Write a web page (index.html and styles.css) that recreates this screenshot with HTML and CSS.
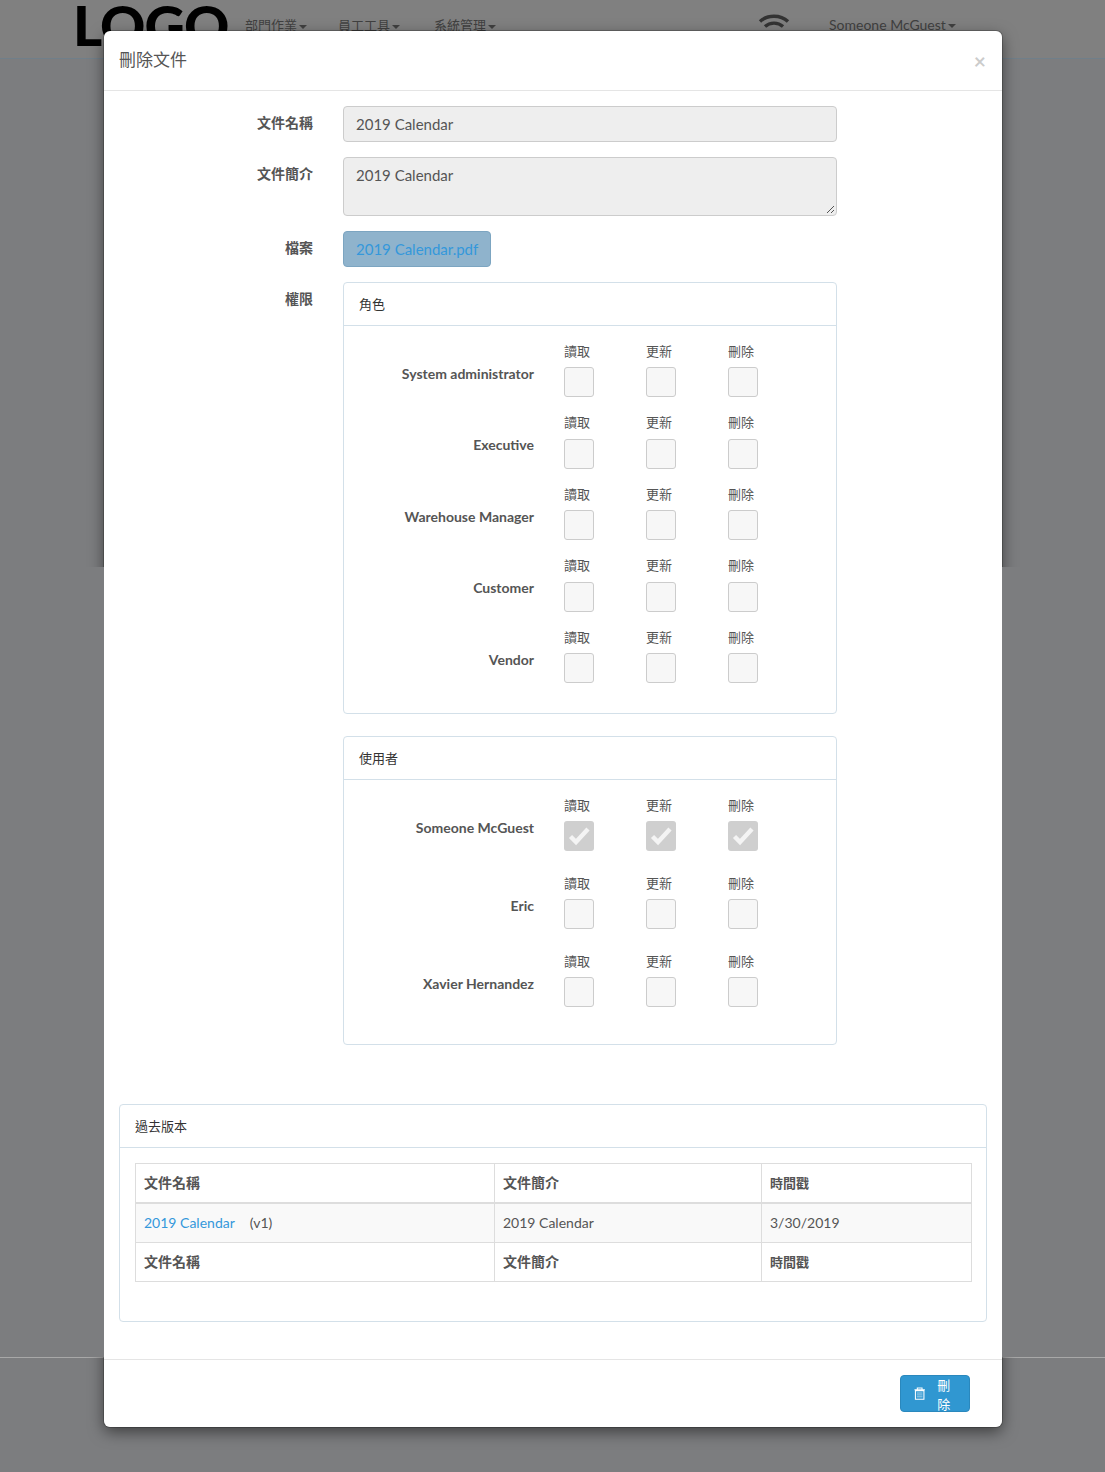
FILE: index.html
```html
<!DOCTYPE html>
<html lang="zh-Hant">
<head>
<meta charset="utf-8">
<title>刪除文件</title>
<link rel="stylesheet" href="styles.css">
</head>
<body>
<div class="page">
  <header class="topbar">
    <div class="logo">LOGO</div>
    <nav class="nav">
      <span class="nav-item nav-a">部門作業<i class="caret"></i></span>
      <span class="nav-item nav-b">員工工具<i class="caret"></i></span>
      <span class="nav-item nav-c">系統管理<i class="caret"></i></span>
    </nav>
    <svg class="wifi" width="32" height="24" viewBox="0 0 32 24"><g fill="none" stroke="#333" stroke-width="3.4"><path d="M2 8.5C9.5 1.5 22.5 1.5 30 8.5"/><path d="M7 13.5C12 9 20 9 25 13.5"/></g></svg>
    <span class="nav-item nav-user">Someone McGuest<i class="caret"></i></span>
  </header>
  <div class="bottom-line"></div>
  <div class="modal-shadow"></div>
  <div class="scrim-strip"></div>

  <main class="modal">
    <div class="modal-header">
      <h4 class="modal-title">刪除文件</h4>
      <span class="close">×</span>
    </div>
    <div class="modal-body">
      <div class="form-row">
        <label class="form-label">文件名稱</label>
        <div class="control"><div class="input">2019 Calendar</div></div>
      </div>
      <div class="form-row">
        <label class="form-label">文件簡介</label>
        <div class="control"><div class="input textarea">2019 Calendar
          <svg class="grip" width="9" height="9" viewBox="0 0 9 9"><path d="M1 8 8 1M5 8 8 5" stroke="#555" fill="none"/></svg>
        </div></div>
      </div>
      <div class="form-row">
        <label class="form-label">檔案</label>
        <div class="control"><a class="file-btn">2019 Calendar.pdf</a></div>
      </div>
      <div class="form-row form-row-perm">
        <label class="form-label">權限</label>
        <div class="control">
          <section class="panel panel-roles">
            <div class="panel-heading">角色</div>
            <div class="panel-body">
              <div class="perm-row"><div class="perm-name">System administrator</div><div class="perm-cell"><span>讀取</span><i class="box"></i></div><div class="perm-cell"><span>更新</span><i class="box"></i></div><div class="perm-cell"><span>刪除</span><i class="box"></i></div></div>
              <div class="perm-row"><div class="perm-name">Executive</div><div class="perm-cell"><span>讀取</span><i class="box"></i></div><div class="perm-cell"><span>更新</span><i class="box"></i></div><div class="perm-cell"><span>刪除</span><i class="box"></i></div></div>
              <div class="perm-row"><div class="perm-name">Warehouse Manager</div><div class="perm-cell"><span>讀取</span><i class="box"></i></div><div class="perm-cell"><span>更新</span><i class="box"></i></div><div class="perm-cell"><span>刪除</span><i class="box"></i></div></div>
              <div class="perm-row"><div class="perm-name">Customer</div><div class="perm-cell"><span>讀取</span><i class="box"></i></div><div class="perm-cell"><span>更新</span><i class="box"></i></div><div class="perm-cell"><span>刪除</span><i class="box"></i></div></div>
              <div class="perm-row"><div class="perm-name">Vendor</div><div class="perm-cell"><span>讀取</span><i class="box"></i></div><div class="perm-cell"><span>更新</span><i class="box"></i></div><div class="perm-cell"><span>刪除</span><i class="box"></i></div></div>
            </div>
          </section>
          <section class="panel panel-users">
            <div class="panel-heading">使用者</div>
            <div class="panel-body">
              <div class="perm-row"><div class="perm-name">Someone McGuest</div>
                <div class="perm-cell"><span>讀取</span><i class="box checked"><svg width="30" height="30" viewBox="0 0 30 30"><path d="M6.5 15.5 12 21 24 8" fill="none" stroke="#f4f4f4" stroke-width="4.4"/></svg></i></div>
                <div class="perm-cell"><span>更新</span><i class="box checked"><svg width="30" height="30" viewBox="0 0 30 30"><path d="M6.5 15.5 12 21 24 8" fill="none" stroke="#f4f4f4" stroke-width="4.4"/></svg></i></div>
                <div class="perm-cell"><span>刪除</span><i class="box checked"><svg width="30" height="30" viewBox="0 0 30 30"><path d="M6.5 15.5 12 21 24 8" fill="none" stroke="#f4f4f4" stroke-width="4.4"/></svg></i></div>
              </div>
              <div class="perm-row"><div class="perm-name">Eric</div><div class="perm-cell"><span>讀取</span><i class="box"></i></div><div class="perm-cell"><span>更新</span><i class="box"></i></div><div class="perm-cell"><span>刪除</span><i class="box"></i></div></div>
              <div class="perm-row"><div class="perm-name">Xavier Hernandez</div><div class="perm-cell"><span>讀取</span><i class="box"></i></div><div class="perm-cell"><span>更新</span><i class="box"></i></div><div class="perm-cell"><span>刪除</span><i class="box"></i></div></div>
            </div>
          </section>
        </div>
      </div>

      <section class="panel panel-history">
        <div class="panel-heading">過去版本</div>
        <div class="panel-body">
          <table class="table">
            <colgroup><col class="col-name"><col class="col-desc"><col class="col-time"></colgroup>
            <thead><tr><th>文件名稱</th><th>文件簡介</th><th class="th-small">時間戳</th></tr></thead>
            <tbody><tr><td><a class="link">2019 Calendar</a><span class="version">(v1)</span></td><td>2019 Calendar</td><td>3/30/2019</td></tr></tbody>
            <tfoot><tr><th>文件名稱</th><th>文件簡介</th><th class="th-small">時間戳</th></tr></tfoot>
          </table>
        </div>
      </section>
    </div>
    <div class="modal-footer">
      <button class="btn-delete">
        <svg width="12" height="13" viewBox="0 0 12 13"><g fill="none" stroke="#fff" stroke-width="1.1"><path d="M1.5 3.5h9v9h-9zM.5 2.5h11M3.5 2V.8h5V2"/><path d="M3 6h6M3 8h6M3 10h6" stroke-width=".8" opacity=".75"/></g></svg>
        刪除
      </button>
    </div>
  </main>
</div>
</body>
</html>
```
FILE: styles.css
```css
* { box-sizing: border-box; }
html, body { margin: 0; padding: 0; }
body {
  font-family: "Lato", "Noto Sans CJK TC", sans-serif;
  font-size: 15px;
  line-height: 1.42857;
  color: #555;
  background: #7c7d7f;
}
.page { position: relative; height: 1472px; overflow: hidden; }

/* Dimmed page behind the dialog */
.topbar {
  display: flex;
  align-items: flex-start;
  height: 59px;
  padding-left: 73px;
  background: #808080;
  border-bottom: 1px solid #707f8a;
}
.logo {
  font-family: "Lato", sans-serif;
  font-weight: 900;
  font-size: 56px;
  line-height: 50px;
  letter-spacing: -1px;
  color: #000;
  width: 172px;
}
.nav { display: flex; padding-top: 15px; }
.nav-item { font-size: 13px; line-height: 20px; color: #404040; white-space: nowrap; }
.nav-a { width: 93px; }
.nav-b { width: 96px; }
.nav-user { margin-top: 15px; font-size: 14px; }
.wifi { margin-left: 262px; margin-top: 13px; flex: none; }
.nav-user { margin-left: 39px; }
.caret {
  display: inline-block;
  margin-left: 2px;
  vertical-align: middle;
  border-top: 4px solid #404040;
  border-left: 4px solid transparent;
  border-right: 4px solid transparent;
}
.bottom-line {
  position: absolute; left: 0; right: 0; top: 1357px; height: 1px; background: #a8a8a8;
}

/* The dialog's shadow shows only above and below the strip */
.modal-shadow {
  position: absolute; z-index: 1; left: 104px; top: 31px; width: 898px; height: 1396px;
  border-radius: 6px;
  box-shadow: 0 0 0 1px rgba(0,0,0,.2), 0 5px 15px rgba(0,0,0,.5);
}
.scrim-strip {
  position: absolute; z-index: 2; left: 0; right: 0; top: 567px; height: 790px;
  background: #7c7d7f;
}
.modal {
  position: absolute; z-index: 3; left: 104px; top: 31px; width: 898px; height: 1396px;
  background: #fff;
  border-radius: 6px;
  display: flex;
  flex-direction: column;
}
.modal-header {
  display: flex;
  justify-content: space-between;
  align-items: center;
  height: 60px;
  padding: 0 15px;
  border-bottom: 1px solid #e5e5e5;
}
.modal-title { margin: 0; font-size: 17px; font-weight: 400; color: #555; }
.close { font-size: 21px; font-weight: 700; color: #000; opacity: .2; line-height: 1; padding-right: 1px; }
.modal-body { padding: 15px 15px 0; flex: 1; }
.modal-footer {
  display: flex;
  justify-content: flex-end;
  padding: 15px 32px 15px 15px;
  border-top: 1px solid #e5e5e5;
}

/* Form rows */
.form-row { display: flex; gap: 30px; margin-bottom: 15px; }
.form-label {
  width: 194px;
  flex: none;
  text-align: right;
  font-size: 14px;
  font-weight: 700;
  line-height: 20px;
  padding-top: 7px;
  color: #555;
}
.control { width: 494px; flex: none; }
.input {
  position: relative;
  height: 36px;
  padding: 7px 12px;
  font-size: 15px;
  line-height: 20px;
  background: #eee;
  border: 1px solid #ccc;
  border-radius: 4px;
}
.textarea { height: 59px; }
.grip { position: absolute; right: 1px; bottom: 1px; }
.file-btn {
  display: inline-block;
  height: 36px;
  padding: 7px 12px;
  line-height: 20px;
  color: #3498db;
  background: #8fb3cc;
  border: 1px solid #7ca5c1;
  border-radius: 4px;
}

/* Panels */
.panel { background: #fff; border: 1px solid #d3e0e9; border-radius: 4px; }
.panel-heading {
  height: 43px;
  padding: 0 15px;
  font-size: 13px;
  line-height: 42px;
  color: #333;
  border-bottom: 1px solid #d3e0e9;
}
.panel-body { padding: 15px; }
.panel-roles { margin-bottom: 22px; height: 432px; }
.panel-users { height: 309px; }
.panel-history { height: 218px; margin-top: 59px; }
.form-row-perm { margin-bottom: 0; }

.perm-row { display: flex; margin-bottom: 15px; }
.panel-users .perm-row { margin-bottom: 21.5px; }
.perm-name {
  width: 190px;
  flex: none;
  margin-right: 30px;
  margin-left: -15px;
  padding-top: 23px;
  text-align: right;
  font-size: 14px;
  font-weight: 700;
  line-height: 20px;
}
.panel-body .perm-name { width: 190px; margin-left: 0; }
.perm-row { margin-left: -15px; }
.perm-cell { width: 82px; flex: none; display: flex; flex-direction: column; align-items: flex-start; }
.perm-cell span { font-size: 13px; line-height: 21.43px; margin-bottom: 5px; }
.box {
  display: block;
  width: 30px;
  height: 30px;
  background: #f7f7f7;
  border: 1px solid #ccc;
  border-radius: 3px;
}
.box.checked { background: #cfcfcf; border: 0; }
.box svg { display: block; }

/* Versions table */
.table { width: 836px; border-collapse: collapse; table-layout: fixed; font-size: 14px; }
.col-name { width: 359px; }
.col-desc { width: 267px; }
.col-time { width: 210px; }
.table th, .table td { border: 1px solid #ddd; padding: 8px; line-height: 20px; text-align: left; }
.table th { font-size: 14px; font-weight: 700; height: 39px; }
.table .th-small { font-size: 13px; }
.table thead th { border-bottom: 2px solid #ddd; }
.table td { background: #f9f9f9; height: 40px; }
.link { color: #3498db; }
.version { margin-left: 15px; }

.btn-delete {
  display: inline-flex;
  align-items: center;
  gap: 6px;
  width: 70px;
  height: 37px;
  padding: 0 13px;
  font-family: inherit;
  font-size: 13px;
  color: #fff;
  background: #3097d1;
  border: 1px solid #2a88bd;
  border-radius: 4px;
}
```
